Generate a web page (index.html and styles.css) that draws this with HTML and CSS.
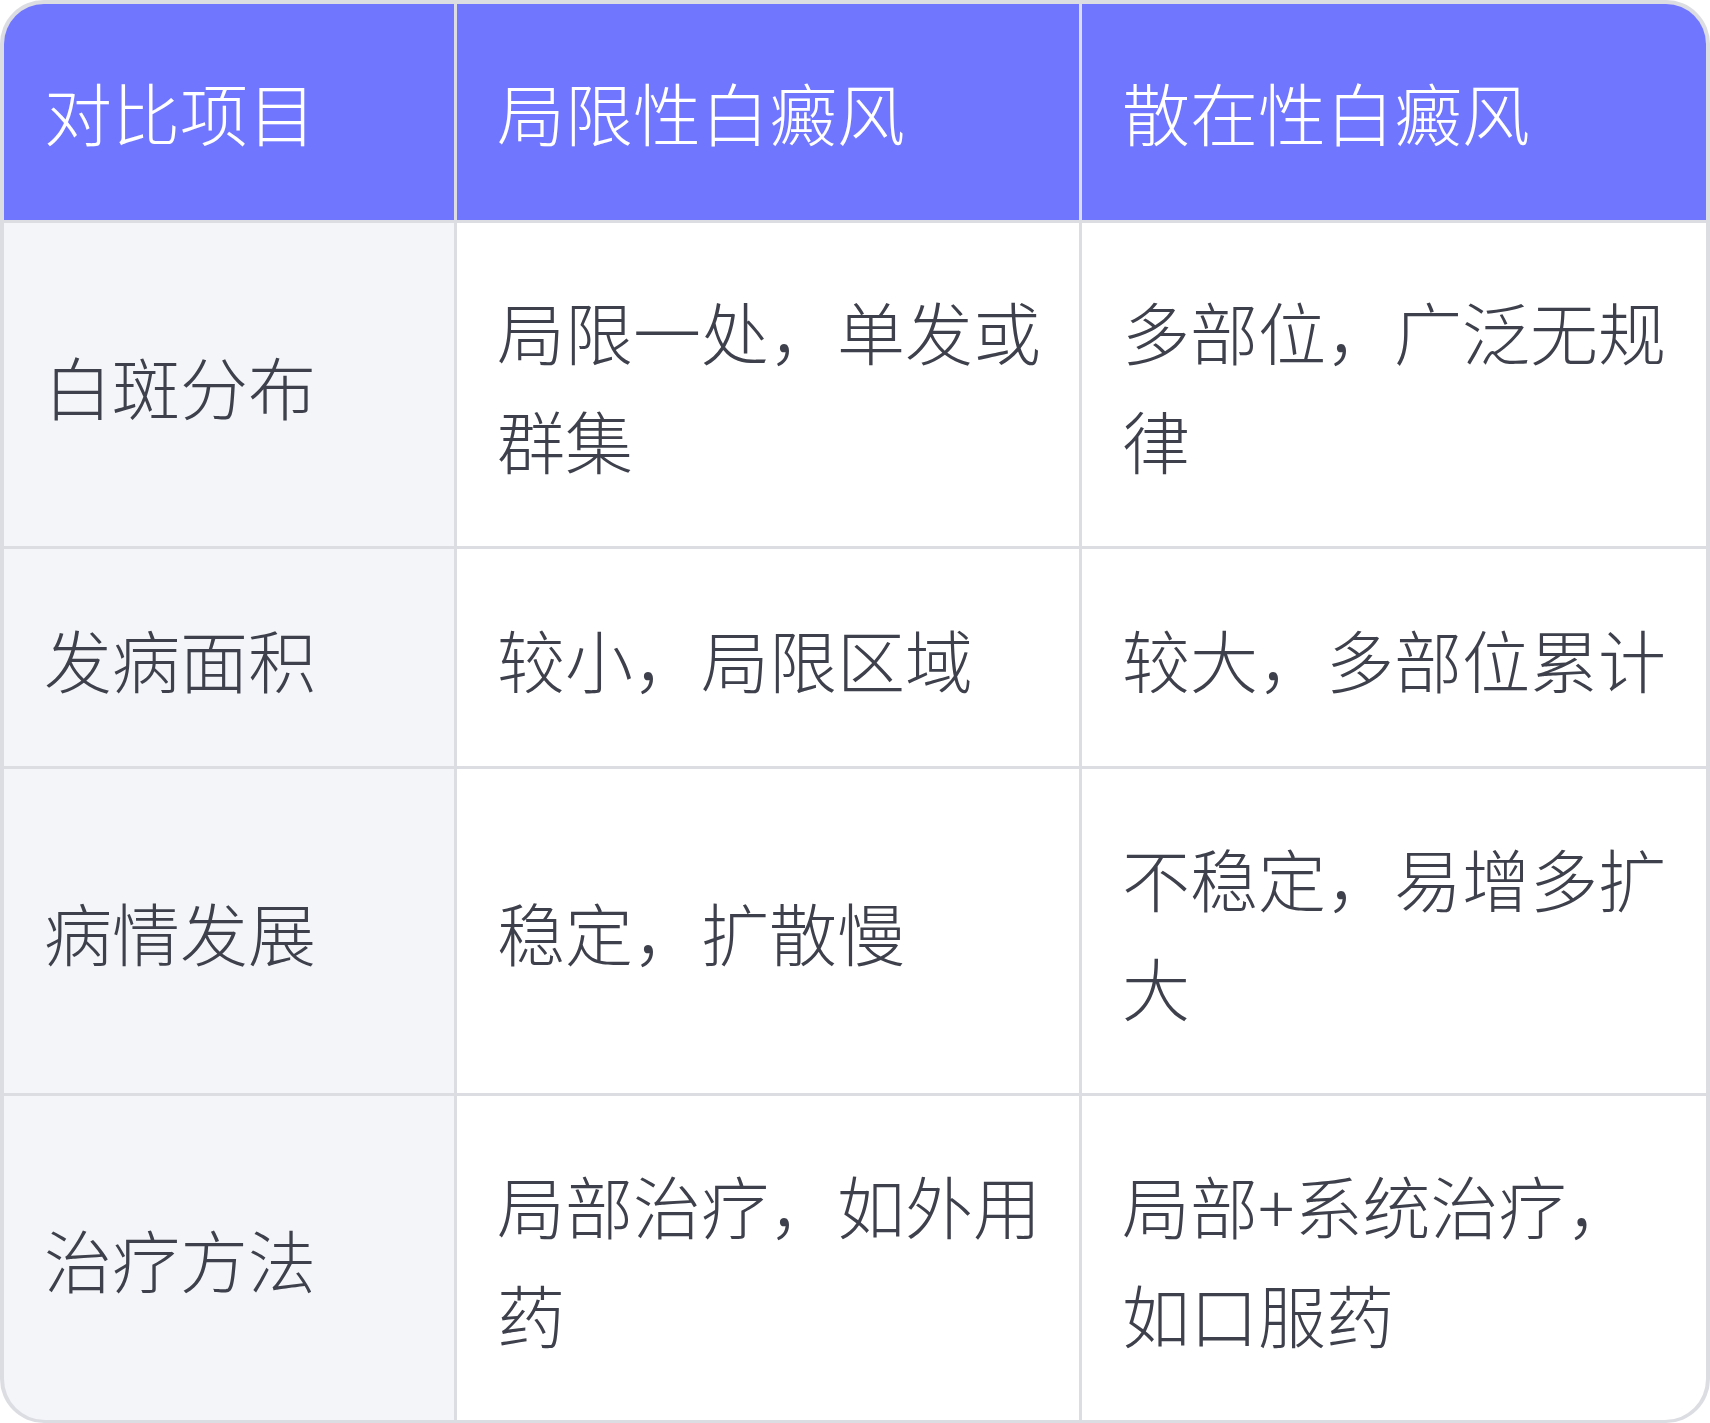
FILE: index.html
```html
<!DOCTYPE html>
<html lang="zh-CN">
<head>
<meta charset="utf-8">
<title>局限性白癜风与散在性白癜风对比</title>
<link rel="stylesheet" href="styles.css">
</head>
<body>
<div class="table" role="table">
  <div class="cell head first tl" role="columnheader">对比项目</div>
  <div class="cell head" role="columnheader">局限性白癜风</div>
  <div class="cell head tr" role="columnheader">散在性白癜风</div>

  <div class="cell label" role="rowheader">白斑分布</div>
  <div class="cell" role="cell">局限一处，单发或群集</div>
  <div class="cell" role="cell">多部位，广泛无规律</div>

  <div class="cell label" role="rowheader">发病面积</div>
  <div class="cell" role="cell">较小，局限区域</div>
  <div class="cell" role="cell">较大，多部位累计</div>

  <div class="cell label" role="rowheader">病情发展</div>
  <div class="cell" role="cell">稳定，扩散慢</div>
  <div class="cell" role="cell">不稳定，易增多扩大</div>

  <div class="cell label bl" role="rowheader">治疗方法</div>
  <div class="cell" role="cell">局部治疗，如外用药</div>
  <div class="cell br" role="cell">局部+系统治疗，如口服药</div>
</div>
</body>
</html>
```
FILE: styles.css
```css
html, body {
  margin: 0;
  padding: 0;
  background: #ffffff;
}

.table {
  box-sizing: border-box;
  width: 1710px;
  height: 1423px;
  display: grid;
  grid-template-columns: 450px 622px 624px;
  grid-template-rows: 216px 323px 217px 324px 324px;
  gap: 3px;
  padding: 4px 4px 3px 4px;
  background: #dcdde3;
  border-radius: 44px;
  overflow: hidden;
  font-family: "Noto Sans CJK SC", "Noto Sans", sans-serif;
  font-weight: 300;
  font-size: 68px;
  line-height: 1.6;
  color: #3e414c;
}

.cell {
  display: flex;
  align-items: center;
  padding: 3px 36px 0 40px;
  background: #ffffff;
  box-sizing: border-box;
}

.cell.head {
  padding-top: 0;
  background: #7176ff;
  color: #ffffff;
}

.cell.label {
  background: #f4f5f9;
}

.tl { border-top-left-radius: 40px; }
.tr { border-top-right-radius: 40px; }
.bl { border-bottom-left-radius: 41px; }
.br { border-bottom-right-radius: 41px; }
```
